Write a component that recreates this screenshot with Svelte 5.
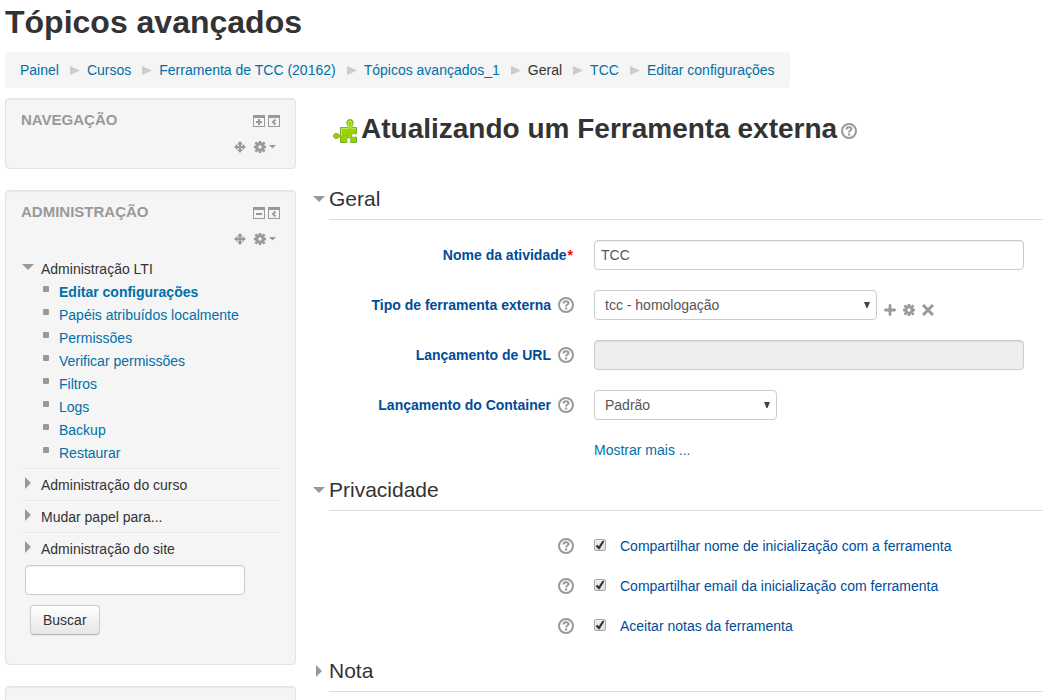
<script lang="ts">
  type Crumb = { text: string; link?: boolean };

  const crumbs: Crumb[] = [
    { text: 'Painel', link: true },
    { text: 'Cursos', link: true },
    { text: 'Ferramenta de TCC (20162)', link: true },
    { text: 'Tópicos avançados_1', link: true },
    { text: 'Geral' },
    { text: 'TCC', link: true },
    { text: 'Editar configurações', link: true },
  ];

  const ltiLinks = [
    'Editar configurações',
    'Papéis atribuídos localmente',
    'Permissões',
    'Verificar permissões',
    'Filtros',
    'Logs',
    'Backup',
    'Restaurar',
  ];

  const otherMenus = ['Administração do curso', 'Mudar papel para...', 'Administração do site'];

  let privacy = $state([
    { id: 'sendname', text: 'Compartilhar nome de inicialização com a ferramenta', checked: true },
    { id: 'sendemail', text: 'Compartilhar email da inicialização com ferramenta', checked: true },
    { id: 'acceptgrades', text: 'Aceitar notas da ferramenta', checked: true },
  ]);

  let name = $state('TCC');
  let toolType = $state('tcc');
  let container = $state('default');
  let search = $state('');
  let ltiOpen = $state(true);
  let geralOpen = $state(true);
  let privacyOpen = $state(true);
  let notaOpen = $state(false);
</script>

{#snippet help(topic)}
  <button type="button" class="icon" aria-label="Ajuda com {topic}">
    <svg width="16" height="16" viewBox="0 0 16 16" fill="none" stroke="#999" stroke-width="2">
      <circle cx="8" cy="8" r="7" />
      <path d="M5.500 6.500C5.500 4.800 6.600 4.200 8 4.200s2.500.7 2.500 1.900C10.500 7.600 8 7.400 8 9.500" />
      <path d="M7 11.500h2.200" />
    </svg>
  </button>
{/snippet}

{#snippet caret(open)}
  <svg class="caret" width="12" height="12" viewBox="0 0 12 12" fill="#999">
    {#if open}
      <path d="M0 3h12L6 9z" />
    {:else}
      <path d="M3 0v12l6-6z" />
    {/if}
  </svg>
{/snippet}

{#snippet gear()}
  <svg width="12" height="12" viewBox="0 0 12 12" fill="none" stroke="#999">
    <circle cx="6" cy="6" r="3.200" stroke-width="3" />
    <path d="M6 0v2M6 10v2M0 6h2M10 6h2M1.400 1.400l1.600 1.600M9 9l1.600 1.600M10.600 1.400L9 3M3 9l-1.600 1.600" stroke-width="2.600" />
  </svg>
{/snippet}

{#snippet blockHead(title, collapsed)}
  <div class="block-title">
    <h2>{title}</h2>
    <div class="block-toggles">
      <button type="button" class="icon" aria-label={collapsed ? 'Mostrar bloco' : 'Ocultar bloco'}>
        <svg width="12" height="12" viewBox="0 0 12 12" fill="#999">
          <path fill-rule="evenodd" d="M0 0h12v12H0zM1 3v8h10V3z" />
          <path d="M3 6h6v2H3z" />
          {#if collapsed}
            <path d="M5 4h2v6H5z" />
          {/if}
        </svg>
      </button>
      <button type="button" class="icon" aria-label="Mover para a doca">
        <svg width="12" height="12" viewBox="0 0 12 12" fill="#999">
          <path fill-rule="evenodd" d="M0 0h12v12H0zM1 3v8h10V3z" />
          <path d="M7.500 4.500L5 7l2.500 2.500" fill="none" stroke="#999" stroke-width="2" />
        </svg>
      </button>
    </div>
  </div>
  <div class="block-controls">
    <button type="button" class="icon" aria-label="Mover bloco">
      <svg width="12" height="12" viewBox="0 0 12 12" fill="#999">
        <path d="M5 2h2v8H5zM2 5h8v2H2z" />
        <path d="M6 0l3 3.500H3zM6 12l3-3.500H3zM0 6l3.500-3v6zM12 6L8.500 3v6z" />
      </svg>
    </button>
    <button type="button" class="icon actions" aria-label="Ações do bloco">
      {@render gear()}
      <svg width="7" height="12" viewBox="0 0 7 12" fill="#999"><path d="M0 4h7L3.500 7.500z" /></svg>
    </button>
  </div>
{/snippet}

{#snippet legend(text, open, toggle)}
  <h3 class="legend">
    <button type="button" aria-expanded={open} onclick={toggle}>
      {@render caret(open)}
      <span>{text}</span>
    </button>
  </h3>
{/snippet}

<div class="page">
  <header>
    <h1>Tópicos avançados</h1>
    <nav aria-label="Caminho da página">
      <ol class="breadcrumb">
        {#each crumbs as crumb, i}
          <li>
            {#if i > 0}
              <svg width="10" height="10" viewBox="0 0 10 10" fill="#ccc"><path d="M0 1v9l10-4.500z" /></svg>
            {/if}
            {#if crumb.link}
              <a href="#top">{crumb.text}</a>
            {:else}
              <span>{crumb.text}</span>
            {/if}
          </li>
        {/each}
      </ol>
    </nav>
  </header>

  <div class="columns">
    <aside>
      <section class="block">
        {@render blockHead('Navegação', true)}
      </section>

      <section class="block">
        {@render blockHead('Administração', false)}
        <ul class="tree">
          <li>
            <button type="button" class="branch" aria-expanded={ltiOpen} onclick={() => (ltiOpen = !ltiOpen)}>
              {@render caret(ltiOpen)}
              <span>Administração LTI</span>
            </button>
            {#if ltiOpen}
              <ul class="leaves">
                {#each ltiLinks as link, i}
                  <li><a href="#top" class:current={i === 0}>{link}</a></li>
                {/each}
              </ul>
            {/if}
          </li>
          {#each otherMenus as menu}
            <li class="closed">
              <button type="button" class="branch" aria-expanded="false">
                {@render caret(false)}
                <span>{menu}</span>
              </button>
            </li>
          {/each}
        </ul>
        <form class="search" onsubmit={(e) => e.preventDefault()}>
          <input type="text" aria-label="Buscar na administração" bind:value={search} />
          <button type="submit" class="btn">Buscar</button>
        </form>
      </section>

      <section class="block"></section>
    </aside>

    <main>
      <h2 class="heading">
        <svg width="24" height="24" viewBox="0 0 24 24">
          <path
            d="M7.500 8.500h7.200c.8-1 .2-1.600-.3-2.600C13 2.700 14.500.5 17 .5s4 2.200 2.700 5.400c-.5 1-.9 1.600-.2 2.600h4v6.200c-1.200.9-2-.5-3.300-.2-2 .5-2 3.500 0 4 1.300.3 2.100-1 3.300-.3v5.300h-6c-.8-1.200.8-1.800.4-3.200-.6-2-3.800-2-4.300 0-.4 1.400 1.100 2 .2 3.200H7.500v-5.200c-.8-1-1.600.3-2.900.8C2.300 20 .5 18.800.5 17s1.800-3 4.100-2.200c1.300.5 2.100 1.700 2.900.8z"
            fill="#99d000"
            stroke="#7ab32b"
          />
          <path d="M8.700 16V9.700h6.500c2-1.500-.3-4 .2-6 .5-1.800 2.900-1.800 3.300 0 .4 2-2 4.500 0 6h3.500" fill="none" stroke="#ccec70" />
        </svg>
        <span>Atualizando um Ferramenta externa</span>
        {@render help('Ferramenta externa')}
      </h2>

      <form onsubmit={(e) => e.preventDefault()}>
        <section>
          {@render legend('Geral', geralOpen, () => (geralOpen = !geralOpen))}
          {#if geralOpen}
            <div class="fields">
              <div class="row">
                <div class="label">
                  <label for="name">Nome da atividade<span class="req">*</span></label>
                </div>
                <div class="control"><input id="name" type="text" bind:value={name} /></div>
              </div>
              <div class="row">
                <div class="label">
                  <label for="type">Tipo de ferramenta externa</label>
                  {@render help('Tipo de ferramenta externa')}
                </div>
                <div class="control">
                  <select id="type" class="wide" bind:value={toolType}>
                    <option value="tcc">tcc - homologação</option>
                  </select>
                  <div class="tools">
                    <button type="button" class="icon" aria-label="Adicionar ferramenta">
                      <svg width="12" height="12" viewBox="0 0 12 12" stroke="#999" stroke-width="2.800" stroke-linecap="round">
                        <path d="M6 1.400v9.200M1.400 6h9.200" />
                      </svg>
                    </button>
                    <button type="button" class="icon" aria-label="Editar ferramenta">{@render gear()}</button>
                    <button type="button" class="icon" aria-label="Excluir ferramenta">
                      <svg width="12" height="12" viewBox="0 0 12 12" stroke="#999" stroke-width="3">
                        <path d="M1 1l10 10M11 1L1 11" />
                      </svg>
                    </button>
                  </div>
                </div>
              </div>
              <div class="row">
                <div class="label">
                  <label for="url">Lançamento de URL</label>
                  {@render help('Lançamento de URL')}
                </div>
                <div class="control"><input id="url" type="text" disabled /></div>
              </div>
              <div class="row">
                <div class="label">
                  <label for="container">Lançamento do Container</label>
                  {@render help('Lançamento do Container')}
                </div>
                <div class="control">
                  <select id="container" class="narrow" bind:value={container}>
                    <option value="default">Padrão</option>
                  </select>
                </div>
              </div>
              <div class="row">
                <div class="control more"><a href="#top">Mostrar mais ...</a></div>
              </div>
            </div>
          {/if}
        </section>

        <section>
          {@render legend('Privacidade', privacyOpen, () => (privacyOpen = !privacyOpen))}
          {#if privacyOpen}
            <div class="fields checks">
              {#each privacy as item}
                <div class="row">
                  <div class="label">{@render help(item.text)}</div>
                  <div class="control">
                    <input id={item.id} type="checkbox" bind:checked={item.checked} />
                    <label for={item.id}>{item.text}</label>
                  </div>
                </div>
              {/each}
            </div>
          {/if}
        </section>

        <section>
          {@render legend('Nota', notaOpen, () => (notaOpen = !notaOpen))}
        </section>
      </form>
    </main>
  </div>
</div>

<style>
  :global(body) {
    margin: 0;
    background: #fff;
  }

  :global(html) {
    scrollbar-width: none;
  }

  .page {
    padding: 2px 0 0 5px;
    color: #333;
    font: 14px/20px 'Liberation Sans', Arial, sans-serif;
  }

  .page * {
    box-sizing: border-box;
  }

  h1,
  h2,
  h3,
  ul,
  ol {
    margin: 0;
    padding: 0;
    list-style: none;
  }

  h1 {
    margin-bottom: 10px;
    font-size: 32px;
    line-height: 40px;
  }

  a {
    color: #0070a8;
    text-decoration: none;
  }

  a:hover {
    text-decoration: underline;
  }

  button,
  input,
  select {
    margin: 0;
    font: inherit;
    color: inherit;
  }

  button {
    padding: 0;
    border: 0;
    background: none;
    cursor: pointer;
  }

  svg {
    display: block;
    flex: none;
  }

  .icon {
    display: flex;
    flex: none;
  }

  .breadcrumb {
    display: inline-flex;
    flex-wrap: wrap;
    padding: 8px 15px;
    border-radius: 4px;
    background: #f5f5f5;
    vertical-align: top;
  }

  .breadcrumb li {
    display: flex;
    align-items: center;
  }

  .breadcrumb svg {
    margin: 0 7px 0 11px;
  }

  .columns {
    display: grid;
    grid-template-columns: 291fr 730fr;
    gap: 17px;
    margin-top: 10px;
  }

  .block {
    min-height: 48px;
    margin-bottom: 21px;
    padding: 11px 15px;
    border: 1px solid #e3e3e3;
    border-radius: 4px;
    background: #f5f5f5;
    box-shadow: inset 0 1px 1px rgba(0, 0, 0, 0.05);
  }

  .block-title {
    display: flex;
    justify-content: space-between;
    align-items: center;
  }

  .block-title h2 {
    color: #999;
    font-size: 15px;
    line-height: 20px;
    text-transform: uppercase;
  }

  .block-toggles {
    display: flex;
    gap: 3px;
    padding-top: 2px;
  }

  .block-controls {
    display: flex;
    justify-content: flex-end;
    align-items: center;
    gap: 8px;
    height: 20px;
    margin-top: 7px;
    padding-right: 4px;
  }

  .actions {
    gap: 3px;
  }

  .tree {
    margin-top: 10px;
  }

  .branch {
    display: flex;
    gap: 7px;
    width: 100%;
    text-align: left;
  }

  .branch .caret {
    margin: 2px 0 0 1px;
  }

  .leaves {
    margin: 2px 0 3px;
  }

  .leaves li {
    display: flex;
    gap: 10px;
    padding-left: 22px;
    line-height: 23px;
  }

  .leaves li::before {
    content: '';
    width: 6px;
    height: 6px;
    margin-top: 5px;
    border-radius: 1px;
    background: #999;
  }

  .current {
    font-weight: bold;
  }

  .closed {
    padding: 6px 0 5px;
    border-top: 1px solid #e8e8e8;
    box-shadow: inset 0 1px #fff;
  }

  .search {
    display: flex;
    flex-direction: column;
    align-items: flex-start;
    gap: 10px;
    padding: 1px 4px 18px;
  }

  .btn {
    height: 30px;
    margin-left: 5px;
    padding: 0 12px;
    border: 1px solid #ccc;
    border-bottom-color: #b3b3b3;
    border-radius: 4px;
    background: linear-gradient(#fff, #e6e6e6);
    box-shadow: 0 1px 2px rgba(0, 0, 0, 0.05);
  }

  .heading {
    display: flex;
    align-items: center;
    gap: 4px;
    margin-bottom: 30px;
    padding: 11px 0 0 20px;
    font-size: 28px;
    line-height: 40px;
  }

  .heading > svg,
  .heading .icon {
    margin-top: 4px;
  }

  .legend {
    font-size: 21px;
    font-weight: normal;
    line-height: 40px;
  }

  .legend button {
    display: flex;
    align-items: center;
    gap: 4px;
    width: 100%;
    text-align: left;
  }

  .legend .caret {
    margin-bottom: 2px;
  }

  .legend span {
    flex: 1;
    border-bottom: 1px solid #ddd;
  }

  .fields {
    display: flex;
    flex-direction: column;
    gap: 20px;
    padding: 20px 0 10px 16px;
  }

  .checks {
    gap: 10px;
  }

  .row {
    display: grid;
    grid-template-columns: 245fr 449fr;
    column-gap: 20px;
  }

  .label {
    display: flex;
    justify-content: flex-end;
    align-items: center;
    gap: 7px;
    text-align: right;
  }

  label {
    color: #004c99;
  }

  .label label {
    font-weight: bold;
  }

  .req {
    padding: 0 1px;
    color: #f00;
  }

  .control {
    display: flex;
    grid-column: 2;
    align-items: center;
    min-height: 30px;
    padding-right: 19px;
  }

  .more {
    min-height: 20px;
  }

  input[type='text'],
  select {
    height: 30px;
    border: 1px solid #ccc;
    border-radius: 4px;
    background-color: #fff;
    color: #555;
  }

  input[type='text'] {
    width: 100%;
    padding: 4px 6px;
    box-shadow: inset 0 1px 1px rgba(0, 0, 0, 0.075);
  }

  .search input[type='text'] {
    width: 220px;
    max-width: 100%;
  }

  input[type='text']:disabled {
    background-color: #eee;
  }

  select {
    appearance: none;
    padding: 4px 24px 4px 10px;
    background-image: url("data:image/svg+xml,%3Csvg xmlns='http://www.w3.org/2000/svg' width='6' height='6'%3E%3Cpath d='M0 0h6L3.500 6h-1z' fill='%23444'/%3E%3C/svg%3E");
    background-repeat: no-repeat;
    background-position: right 6px center;
  }

  .wide {
    width: 283px;
  }

  .narrow {
    width: 183px;
  }

  .tools {
    display: flex;
    align-self: flex-end;
    gap: 7px;
    margin: 0 0 4px 7px;
  }

  input[type='checkbox'] {
    appearance: none;
    flex: none;
    width: 12px;
    height: 12px;
    margin: 0 14px 2px 0;
    border: 1px solid #aaa;
    border-radius: 2px;
    background: linear-gradient(#eee, #ddd);
  }

  input[type='checkbox']:checked {
    background-image: url("data:image/svg+xml,%3Csvg xmlns='http://www.w3.org/2000/svg' width='10' height='10'%3E%3Cpath d='M1.500 5.500L4 8l4.500-7' fill='none' stroke='%23333' stroke-width='2.200'/%3E%3C/svg%3E"),
      linear-gradient(#eee, #ddd);
  }
</style>
